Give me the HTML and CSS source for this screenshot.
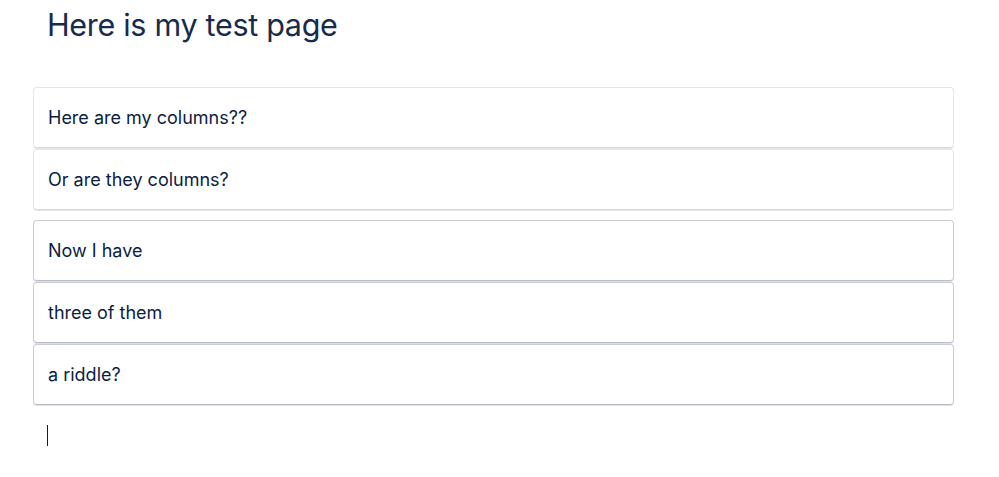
FILE: index.html
```html
<!DOCTYPE html>
<html lang="en">
<head>
    <meta charset="UTF-8">
    <meta name="viewport" content="width=device-width, initial-scale=1.0">
    <title>Test page</title>
    <link rel="stylesheet" href="styles.css">
</head>
<body>
    <div class="page">
        <h1 class="title">Here is my test page</h1>

        <div class="group">
            <div class="cell">Here are my columns??</div>
            <div class="cell">Or are they columns?</div>
        </div>

        <div class="group dark">
            <div class="cell">Now I have</div>
            <div class="cell">three of them</div>
            <div class="cell">a riddle?</div>
        </div>

        <div class="editor"><span class="caret"></span></div>
    </div>
</body>
</html>
```

FILE: styles.css
```css
body { margin: 0; background: #fff; font-family: Inter, "Noto Sans", Roboto, sans-serif; color: #172b4d; }
.page { padding: 0 45px 0 33px; }
.title { font-size: 30.5px; font-weight: 400; margin: 0; padding: 6px 0 0 14px; height: 87px; box-sizing: border-box; letter-spacing: -0.3px; }
.group { display: flex; flex-direction: column; gap: 1px; margin-bottom: 10px; }
.cell { border: 1px solid #e4e6ea; border-bottom-color: #d5d8de; border-radius: 4px; height: 61px; box-sizing: border-box; display: flex; align-items: center; padding: 0 14px; font-size: 18px; color: #0b1d42; box-shadow: 0 1px 0 #e4e6ea; }
.dark .cell { border-color: #c9ccd2; border-bottom-color: #b9bdc5; box-shadow: 0 1px 0 #dcdfe4; }
.editor { padding: 10px 0 0 14px; height: 30px; }
.caret { display: inline-block; width: 1px; height: 21px; background: #0b1d42; }
```
